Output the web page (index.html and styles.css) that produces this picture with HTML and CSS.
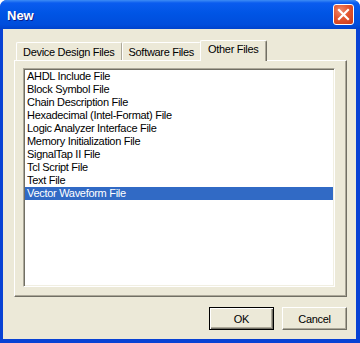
FILE: index.html
```html
<!DOCTYPE html>
<html>
<head>
<title>New</title>
<meta charset="utf-8">
<link rel="stylesheet" href="styles.css">
</head>
<body>
	<div class="window">
		<div class="titlebar">
			<span class="title">New</span>
			<span class="close">
				<svg width="13" height="13" viewBox="0 0 13 13"><path d="M2 2 L11 11 M11 2 L2 11" stroke="#fff" stroke-width="2.2" stroke-linecap="square"/></svg>
			</span>
		</div>
		<div class="client">
			<div class="tabs">
				<div class="tab">Device Design Files</div>
				<div class="tab">Software Files</div>
				<div class="tab active">Other Files</div>
			</div>
			<div class="panel">
				<ul class="filelist">
					<li>AHDL Include File</li>
					<li>Block Symbol File</li>
					<li>Chain Description File</li>
					<li>Hexadecimal (Intel-Format) File</li>
					<li>Logic Analyzer Interface File</li>
					<li>Memory Initialization File</li>
					<li>SignalTap II File</li>
					<li>Tcl Script File</li>
					<li>Text File</li>
					<li class="selected">Vector Waveform File</li>
				</ul>
			</div>
			<div class="buttons">
				<button class="btn default">OK</button>
				<button class="btn">Cancel</button>
			</div>
		</div>
	</div>
</body>
</html>
```

FILE: styles.css
```css
body {
	margin: 0;
	font-family: "Liberation Sans", Arial, sans-serif;
	font-size: 11px;
	letter-spacing: -0.3px;
	background: #fff;
}
.window {
	width: 360px;
	height: 343px;
	box-sizing: border-box;
	display: flex;
	flex-direction: column;
	background: #0842d4;
	border-radius: 7px 7px 0 0;
	padding-bottom: 4px;
}
.titlebar {
	height: 29px;
	flex-shrink: 0;
	display: flex;
	align-items: center;
	padding: 0 6px 0 7px;
	border-radius: 7px 7px 0 0;
	background: linear-gradient(to bottom, #3d8cf5 0, #0a5cef 3px, #0055e5 45%, #004ddc 85%, #0042cc 100%);
}
.title {
	flex: 1;
	color: #fff;
	font-weight: bold;
	font-size: 13px;
	letter-spacing: 0;
	text-shadow: 1px 1px #0a1e8c;
	margin-top: 1px;
}
.close {
	width: 21px;
	height: 21px;
	box-sizing: border-box;
	border: 1px solid #fff;
	border-radius: 3px;
	background: radial-gradient(circle at 35% 30%, #f08a6c 0, #e2552f 45%, #c8381a 100%);
	display: flex;
	align-items: center;
	justify-content: center;
}
.client {
	flex: 1;
	margin: 0 4px 0 3px;
	background: #ece9d8;
	padding: 11px 9px 9px 11px;
	display: flex;
	flex-direction: column;
}
.tabs {
	display: flex;
	align-items: flex-end;
	height: 20px;
	padding-left: 2px;
	position: relative;
	z-index: 1;
}
.tab {
	height: 18px;
	box-sizing: border-box;
	padding: 2px 6px 0 6px;
	border-top: 1px solid #fff;
	border-left: 1px solid #fff;
	border-right: 1px solid #aca899;
	border-radius: 2px 2px 0 0;
	line-height: 15px;
	white-space: nowrap;
}
.tab.active {
	height: 21px;
	margin-bottom: -1px;
	margin-left: -1px;
	padding: 1px 7px 0 7px;
	background: #ece9d8;
	border-right: 1px solid #716f64;
	box-shadow: inset -1px 0 #aca899;
}
.panel {
	flex: 1;
	border-top: 1px solid #fff;
	border-left: 1px solid #fff;
	border-right: 1px solid #716f64;
	border-bottom: 1px solid #716f64;
	box-shadow: inset -1px -1px #aca899;
	padding: 7px 11px 9px 8px;
	display: flex;
}
.filelist {
	flex: 1;
	list-style: none;
	margin: 0;
	padding: 1px;
	background: #fff;
	border: 1px solid;
	border-color: #aca899 #fff #fff #aca899;
	box-shadow: inset 1px 1px #716f64, inset -1px -1px #f1efe2;
}
.filelist li {
	height: 13px;
	line-height: 13px;
	padding-left: 2px;
	white-space: nowrap;
}
.filelist li.selected {
	background: #316ac5;
	color: #fff;
}
.buttons {
	display: flex;
	justify-content: flex-end;
	gap: 8px;
	margin-top: 10px;
}
.btn {
	width: 65px;
	height: 23px;
	font-family: "Liberation Sans", Arial, sans-serif;
	font-size: 11px;
	letter-spacing: -0.3px;
	color: #000;
	background: #ece9d8;
	border: 1px solid;
	border-color: #fff #716f64 #716f64 #fff;
	box-shadow: inset -1px -1px #aca899;
	padding: 0;
}
.btn.default {
	border: 1px solid #000;
	box-shadow: inset 1px 1px #fff, inset -1px -1px #716f64, inset -2px -2px #aca899;
}
```
